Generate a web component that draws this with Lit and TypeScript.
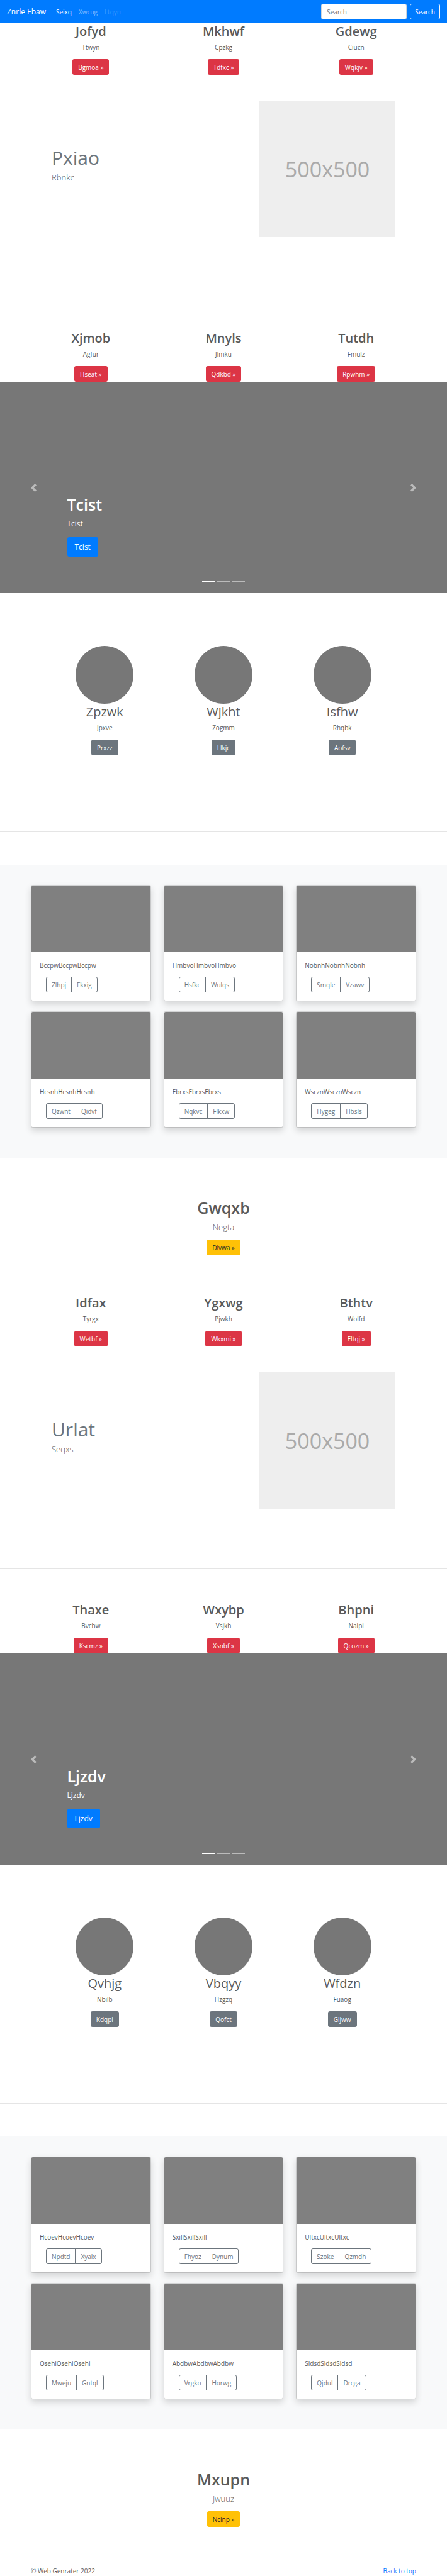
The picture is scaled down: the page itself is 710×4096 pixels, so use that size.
import { LitElement, html, svg, css } from "lit";
import { customElement } from "lit/decorators.js";

interface Item {
  title: string;
  text: string;
  action: string;
}

interface Card {
  text: string;
  actions: [string, string];
}

interface Section {
  intro: Item[];
  feature: { title: string; text: string };
  second: Item[];
  slide: string;
  people: Item[];
  cards: Card[];
  closing: Item;
}

const item = (title: string, text: string, action: string): Item => ({ title, text, action });
const card = (word: string, first: string, second: string): Card => ({
  text: word.repeat(3),
  actions: [first, second],
});

const sections: Section[] = [
  {
    intro: [item("Jofyd", "Ttwyn", "Bgmoa"), item("Mkhwf", "Cpzkg", "Tdfxc"), item("Gdewg", "Ciucn", "Wqkjv")],
    feature: { title: "Pxiao", text: "Rbnkc" },
    second: [item("Xjmob", "Agfur", "Hseat"), item("Mnyls", "Jlmku", "Qdkbd"), item("Tutdh", "Fmulz", "Rpwhm")],
    slide: "Tcist",
    people: [item("Zpzwk", "Jpxve", "Prxzz"), item("Wjkht", "Zogmm", "Llkjc"), item("Isfhw", "Rhqbk", "Aofsv")],
    cards: [
      card("Bccpw", "Zlhpj", "Fkxig"),
      card("Hmbvo", "Hsfkc", "Wulqs"),
      card("Nobnh", "Smqle", "Vzawv"),
      card("Hcsnh", "Qzwnt", "Qidvf"),
      card("Ebrxs", "Nqkvc", "Flkxw"),
      card("Wsczn", "Hygeg", "Hbsls"),
    ],
    closing: item("Gwqxb", "Negta", "Dlvwa"),
  },
  {
    intro: [item("Idfax", "Tyrgx", "Wetbf"), item("Ygxwg", "Pjwkh", "Wkxmi"), item("Bthtv", "Wolfd", "Eltqj")],
    feature: { title: "Urlat", text: "Seqxs" },
    second: [item("Thaxe", "Bvcbw", "Kscmz"), item("Wxybp", "Vsjkh", "Xsnbf"), item("Bhpni", "Naipi", "Qcozm")],
    slide: "Ljzdv",
    people: [item("Qvhjg", "Nbilb", "Kdqpi"), item("Vbqyy", "Hzgzq", "Qofct"), item("Wfdzn", "Fuaog", "Gljww")],
    cards: [
      card("Hcoev", "Npdtd", "Xyalx"),
      card("Sxill", "Fhyoz", "Dynum"),
      card("Ultxc", "Szoke", "Qzmdh"),
      card("Osehi", "Mweju", "Gntql"),
      card("Abdbw", "Vrgko", "Horwg"),
      card("Sldsd", "Qjdul", "Drcga"),
    ],
    closing: item("Mxupn", "Jwuuz", "Ncinp"),
  },
];

const chevronLeft = svg`<path d="M5.25 0l-4 4 4 4 1.5-1.5L4.25 4l2.5-2.5L5.25 0z" fill="#fff"/>`;
const chevronRight = svg`<path d="M2.75 0l-1.5 1.5L3.75 4l-2.5 2.5L2.75 8l4-4-4-4z" fill="#fff"/>`;

@customElement("app-root")
export class AppRoot extends LitElement {
  static styles = css`
    :host {
      display: block;
      background: #fff;
      color: #5a5a5a;
      font: 400 10px/16px "Open Sans", "Noto Sans", sans-serif;
    }
    * {
      box-sizing: border-box;
    }
    h1, h2, p {
      margin: 0;
    }
    a {
      color: #007bff;
      text-decoration: none;
    }

    .navbar {
      display: flex;
      align-items: center;
      min-height: 37px;
      padding: 0 11px;
      background: #007bff;
    }
    .brand {
      margin-right: 16px;
      color: #fff;
      font-size: 12px;
    }
    .links {
      display: flex;
      flex: 1;
      gap: 11px;
    }
    .link {
      color: rgba(255, 255, 255, 0.5);
    }
    .link.active {
      color: #fff;
    }
    .link.disabled {
      color: rgba(255, 255, 255, 0.25);
    }
    .search {
      display: flex;
      gap: 5px;
    }
    .field {
      width: 136px;
      height: 25px;
      padding: 0 8px;
      border: 1px solid #ced4da;
      border-radius: 3px;
      background: #fff;
      color: #495057;
      font: inherit;
    }
    .field::placeholder {
      color: #6c757d;
      opacity: 1;
    }

    .btn {
      display: inline-block;
      height: 25px;
      padding: 4px 8px 3px;
      border: 1px solid transparent;
      border-radius: 3px;
      background: transparent;
      color: #fff;
      font: inherit;
      vertical-align: top;
    }
    .light {
      padding: 4px 7px 3px;
      border-color: #f8f9fa;
    }
    .danger {
      background: #dc3545;
    }
    .secondary {
      background: #6c757d;
    }
    .warning {
      background: #ffc107;
      color: #212529;
    }
    .primary {
      height: 31px;
      padding: 5px 11px;
      background: #007bff;
      font-size: 12px;
      line-height: 20px;
    }
    .outline {
      border-color: #6c757d;
      color: #6c757d;
    }

    .container {
      max-width: 632px;
      margin: 0 auto;
      padding: 0 10px;
    }
    .trio {
      display: grid;
      grid-template-columns: repeat(3, 1fr);
      text-align: center;
    }
    .trio.wide {
      margin: 0 -10px;
    }
    .title {
      margin-bottom: 5px;
      font-size: 20px;
      font-weight: 600;
      line-height: 25px;
    }
    .title.regular {
      font-weight: 400;
    }
    .text {
      margin-bottom: 11px;
    }
    .inner {
      padding: 0 23px;
    }

    .feature {
      display: grid;
      grid-template-columns: 7fr 5fr;
      margin: 41px 0 95px;
    }
    .feature-copy {
      padding: 74px 10px 0;
    }
    .feature-title {
      margin-bottom: 5px;
      color: #6c757d;
      font-size: 30px;
      font-weight: 400;
      line-height: 33px;
    }
    .lead {
      font-size: 13px;
      font-weight: 300;
      line-height: 20px;
    }
    .feature-media {
      padding: 0 10px;
    }
    .placeholder {
      display: grid;
      place-items: center;
      min-height: 217px;
      background: #eee;
      color: #aaa;
      font-size: 34px;
      line-height: 40px;
    }
    .rule {
      height: 1px;
      margin: 0 0 52px;
      border: 0;
      background: rgba(0, 0, 0, 0.1);
    }

    .carousel {
      display: grid;
      grid-template-columns: 15% 1fr 15%;
      min-height: 336px;
      margin-bottom: 84px;
      background: #777;
      color: #fff;
    }
    .arrow {
      display: grid;
      grid-row: 1;
      place-items: center;
      padding: 0;
      border: 0;
      background: none;
      opacity: 0.5;
    }
    .arrow.prev {
      grid-column: 1;
    }
    .arrow.next {
      grid-column: 3;
    }
    .caption {
      grid-area: 1 / 2;
      align-self: end;
      padding-bottom: 58px;
    }
    .display {
      margin-bottom: 5px;
      font-size: 25px;
      font-weight: 600;
      line-height: 32px;
    }
    .caption-text {
      margin-bottom: 11px;
      font-size: 12px;
      line-height: 20px;
    }
    .dots {
      display: flex;
      grid-area: 1 / 2;
      align-self: end;
      justify-self: center;
      gap: 4px;
      padding-bottom: 17px;
    }
    .dot {
      width: 20px;
      height: 2px;
      padding: 0;
      border: 0;
      background: #fff;
      opacity: 0.5;
    }
    .dot.active {
      opacity: 1;
    }

    .people {
      margin-bottom: 121px;
    }
    .avatar {
      width: 92px;
      height: 92px;
      margin: 0 auto;
      border-radius: 50%;
      background: #777;
    }

    .album {
      padding: 32px 0 48px;
      background: #f8f9fa;
    }
    .cards {
      display: grid;
      grid-template-columns: repeat(3, 1fr);
      gap: 16px 20px;
    }
    .card {
      overflow: hidden;
      border: 1px solid rgba(0, 0, 0, 0.125);
      border-radius: 3px;
      background: #fff;
      background-clip: padding-box;
      box-shadow: 0 5px 11px rgba(0, 0, 0, 0.15);
    }
    .cover {
      height: 106px;
      background: #808080;
    }
    .card-body {
      padding: 13px;
    }
    .card-text {
      margin-bottom: 10px;
    }
    .group {
      display: flex;
      padding-left: 10px;
    }
    .group .btn:first-child {
      border-radius: 3px 0 0 3px;
    }
    .group .btn:last-child {
      margin-left: -1px;
      border-radius: 0 3px 3px 0;
    }

    .closing {
      padding: 63px 0;
      text-align: center;
    }
    .closing .lead {
      margin-bottom: 10px;
    }
    .footer {
      display: flex;
      justify-content: space-between;
      line-height: 15px;
    }
  `;

  private trio(items: Item[]) {
    return html`
      <div class="trio wide">
        ${items.map(
          (i) => html`
            <div>
              <h2 class="title">${i.title}</h2>
              <p class="text">${i.text}</p>
              <a class="btn danger" href="#">${i.action} »</a>
            </div>
          `
        )}
      </div>
    `;
  }

  private carousel(word: string) {
    return html`
      <section class="carousel">
        <button class="arrow prev" aria-label="Previous">
          <svg width="13" height="13" viewBox="0 0 8 8">${chevronLeft}</svg>
        </button>
        <div class="caption">
          <h1 class="display">${word}</h1>
          <p class="caption-text">${word}</p>
          <a class="btn primary" href="#">${word}</a>
        </div>
        <div class="dots">
          <button class="dot active" aria-label="Slide 1"></button>
          <button class="dot" aria-label="Slide 2"></button>
          <button class="dot" aria-label="Slide 3"></button>
        </div>
        <button class="arrow next" aria-label="Next">
          <svg width="13" height="13" viewBox="0 0 8 8">${chevronRight}</svg>
        </button>
      </section>
    `;
  }

  private section(s: Section) {
    return html`
      <div class="container">
        ${this.trio(s.intro)}
        <div class="inner">
          <div class="feature">
            <div class="feature-copy">
              <h2 class="feature-title">${s.feature.title}</h2>
              <p class="lead">${s.feature.text}</p>
            </div>
            <div class="feature-media"><div class="placeholder">500x500</div></div>
          </div>
        </div>
      </div>
      <hr class="rule" />
      <div class="container">${this.trio(s.second)}</div>
      ${this.carousel(s.slide)}
      <div class="container">
        <div class="inner">
          <div class="trio people">
            ${s.people.map(
              (i) => html`
                <div>
                  <div class="avatar"></div>
                  <h2 class="title regular">${i.title}</h2>
                  <p class="text">${i.text}</p>
                  <a class="btn secondary" href="#">${i.action}</a>
                </div>
              `
            )}
          </div>
        </div>
      </div>
      <hr class="rule" />
      <section class="album">
        <div class="container">
          <div class="cards">
            ${s.cards.map(
              (c) => html`
                <article class="card">
                  <div class="cover"></div>
                  <div class="card-body">
                    <p class="card-text">${c.text}</p>
                    <div class="group">
                      ${c.actions.map((a) => html`<button class="btn outline">${a}</button>`)}
                    </div>
                  </div>
                </article>
              `
            )}
          </div>
        </div>
      </section>
      <section class="closing">
        <h1 class="display">${s.closing.title}</h1>
        <p class="lead">${s.closing.text}</p>
        <a class="btn warning" href="#">${s.closing.action} »</a>
      </section>
    `;
  }

  render() {
    return html`
      <nav class="navbar">
        <a class="brand" href="#">Znrle Ebaw</a>
        <div class="links">
          <a class="link active" href="#">Seixq</a>
          <a class="link" href="#">Xwcug</a>
          <a class="link disabled" href="#" aria-disabled="true">Ltqyn</a>
        </div>
        <form class="search">
          <input class="field" type="text" placeholder="Search" aria-label="Search" />
          <button class="btn light" type="button">Search</button>
        </form>
      </nav>
      <main>${sections.map((s) => this.section(s))}</main>
      <footer class="container footer">
        <p>© Web Genrater 2022</p>
        <a href="#">Back to top</a>
      </footer>
    `;
  }
}
